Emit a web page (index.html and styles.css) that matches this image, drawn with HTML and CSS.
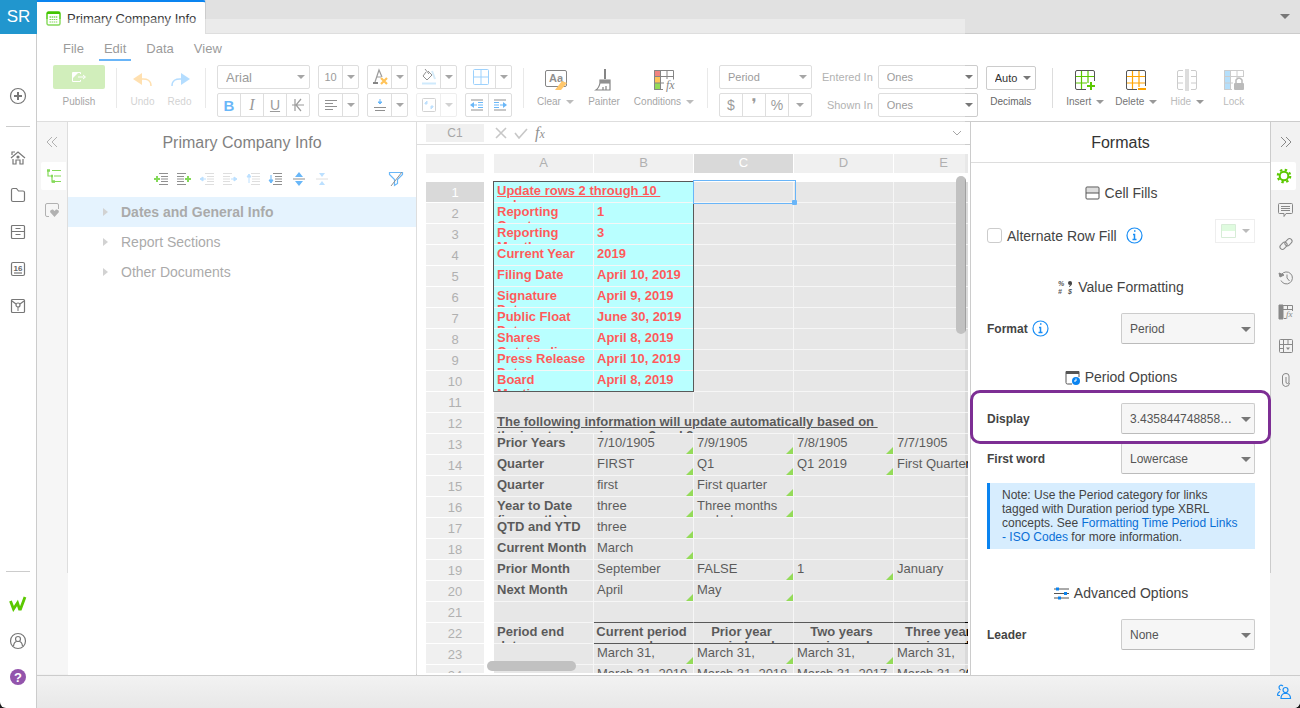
FILE: index.html
```html
<!DOCTYPE html>
<html lang="en">
<head>
    <meta charset="utf-8">
    <title>Primary Company Info</title>
    <meta name="viewport" content="width=device-width, initial-scale=1">
    <link rel="stylesheet" href="styles.css">
</head>
<body>
<div class="app">
    <nav class="rail" aria-label="Main">
        <a class="logo" href="#">SR</a>
        <button class="rail-btn add" aria-label="Create"><svg width="18" height="18" viewBox="0 0 18 18"><circle cx="9" cy="9" r="7.5"/><path d="M9 5v8M5 9h8" stroke-width="2"/></svg></button>
        <div class="rail-group">
            <button class="rail-btn" aria-label="Home"><svg width="16" height="16" viewBox="0 0 16 16"><path d="M1 8l7-6 7 6M2 5V2h3M3 9v5h3v-4h4v4h3V9"/><circle cx="8" cy="7" r="1" fill="#666"/></svg></button>
            <button class="rail-btn" aria-label="Files"><svg width="16" height="16" viewBox="0 0 16 16"><path d="M1.5 13V3q0-1.500 1.500-1.500h3.500l2 2.500H13q1.500 0 1.500 1.500V13q0 1.500-1.500 1.500H3q-1.500 0-1.500-1.500z"/></svg></button>
            <button class="rail-btn" aria-label="Archive"><svg width="16" height="16" viewBox="0 0 16 16"><rect x="1.500" y="1.500" width="13" height="13" rx="1"/><path d="M1.500 7.500h13M5.500 4.500h5M5.500 10.500h5"/></svg></button>
            <button class="rail-btn" aria-label="Calendar"><svg width="16" height="16" viewBox="0 0 16 16"><rect x="1.500" y="1.500" width="13" height="13" rx="1.500"/><path d="M4 12h8"/><text x="8" y="10" text-anchor="middle" class="cal-text">16</text></svg></button>
            <button class="rail-btn" aria-label="Ideas"><svg width="16" height="16" viewBox="0 0 16 16"><rect x="1.500" y="1.500" width="13" height="13" rx="1"/><path d="M2 3l4 3M14 3l-4 3M7 12h2M7 10h2"/><circle cx="8" cy="7" r="2"/></svg></button>
        </div>
        <div class="rail-foot">
            <a class="rail-btn" href="#" aria-label="Wdesk"><svg width="18" height="16" viewBox="0 0 18 16"><path d="M1.500 5l3 8 4-6 2 6h1L16 1" stroke="#5bc800" stroke-width="2.800"/></svg></a>
            <button class="rail-btn" aria-label="Account"><svg width="18" height="18" viewBox="0 0 18 18"><circle cx="9" cy="9" r="7.500"/><circle cx="9" cy="7" r="2.500"/><path d="M4.500 14q.5-4 3-4.500M13.500 14q-.5-4-3-4.500"/></svg></button>
            <button class="rail-btn help" aria-label="Help">?</button>
        </div>
    </nav>

    <div class="main">
        <header class="tabs">
            <a class="tab" href="#"><svg width="15" height="15" viewBox="0 0 15 15"><rect x="1" y="1" width="13" height="13" rx="1.500" fill="none" stroke="#43c500" stroke-width="1.400"/><path d="M1 2h13" stroke="#43c500" stroke-width="2"/><path d="M3.500 6h8M3.500 8.500h8M3.500 11h8" stroke="#43c500" stroke-dasharray="1.500 .6"/></svg>Primary Company Info</a>
            <button class="caret-btn" aria-label="All tabs"><i class="caret big"></i></button>
        </header>

        <div class="toolbar">
            <nav class="menu">
                <a href="#">File</a><a href="#" class="active">Edit</a><a href="#">Data</a><a href="#">View</a>
            </nav>
            <div class="ribbon">
                <button class="tool publish"><span class="publish-face"><svg width="16" height="12" viewBox="0 0 16 12"><path d="M9.500 3V1.500h-8v9h8V9M7 6h7M12 4l2.500 2L12 8" fill="none" stroke="#fff"/><path d="M2 7l5-5H2z" fill="#fff"/></svg></span><span class="label">Publish</span></button>
                <div class="sep"></div>
                <button class="tool off undo"><svg width="22" height="20" viewBox="0 0 22 20"><path d="M1 9l9-6v12z" fill="#ffd086"/><path d="M9 9q10-1 10 7" fill="none" stroke="#ffd086" stroke-width="1.500"/></svg><span class="label">Undo</span></button>
                <button class="tool off"><svg width="22" height="20" viewBox="0 0 22 20"><path d="M21 9l-9-6v12z" fill="#8dcbff"/><path d="M13 9q-10-1-10 7" fill="none" stroke="#8dcbff" stroke-width="1.500"/></svg><span class="label">Redo</span></button>
                <div class="sep"></div>

                <div class="stack">
                    <span class="select font"><select aria-label="Font"><option>Arial</option></select></span>
                    <div class="btns">
                        <button class="on" aria-label="Bold">B</button>
                        <button class="italic" aria-label="Italic">I</button>
                        <button class="underline" aria-label="Underline">U</button>
                        <button aria-label="Strikethrough"><svg width="14" height="14" viewBox="0 0 14 14"><path d="M1 7h12M4 1v12M10 1L5 7l5 6" fill="none" stroke="#666" stroke-width="1.200"/></svg></button>
                    </div>
                </div>
                <div class="stack">
                    <div class="btns split"><button>10</button><button aria-label="Font size"><i class="caret"></i></button></div>
                    <div class="btns split"><button aria-label="Align"><svg width="14" height="12" viewBox="0 0 14 12"><path d="M1 1.500h12M1 4.500h8M1 7.500h12M1 10.500h8" stroke="#555"/></svg></button><button aria-label="Alignment options"><i class="caret"></i></button></div>
                </div>
                <div class="stack">
                    <div class="btns split"><button aria-label="Text color"><svg width="18" height="18" viewBox="0 0 18 18"><path d="M4 14L8 2l3 7M6 9h4" fill="none" stroke="#666" stroke-width="1.200"/><path d="M2 15h5" stroke="#444" stroke-width="2"/><path d="M10 10l6 6M16 10l-6 6" stroke="#ffa400" stroke-width="2.200"/></svg></button><button aria-label="Color options"><i class="caret"></i></button></div>
                    <div class="btns split"><button aria-label="Vertical align"><svg width="14" height="14" viewBox="0 0 14 14"><path d="M1 9.500h12M2 12.500h10" stroke="#555"/><path d="M7 1v5M5 4l2 2 2-2z" fill="#1a91f5" stroke="#1a91f5"/></svg></button><button aria-label="Vertical options"><i class="caret"></i></button></div>
                </div>
                <div class="stack">
                    <div class="btns split"><button aria-label="Fill"><svg width="18" height="18" viewBox="0 0 18 18"><path d="M6 4L3 8l4 4 5-5-4-4M5 1l4 5" fill="none" stroke="#555"/><path d="M12 3l3 8" stroke="#bfe0f5" stroke-width="2"/><path d="M2 15.500h14" stroke="#b5dffb" stroke-width="2"/></svg></button><button aria-label="Fill options"><i class="caret"></i></button></div>
                    <div class="btns split faint"><button aria-label="Merge"><svg width="16" height="16" viewBox="0 0 16 16"><rect x="1.500" y="1.500" width="13" height="13" rx="1" fill="none" stroke="#777"/><path d="M4 7V6l2-2v3zM12 9v1l-2 2V9z" fill="#3ba2fb" stroke="#3ba2fb"/></svg></button><button aria-label="Merge options"><i class="caret"></i></button></div>
                </div>
                <div class="stack">
                    <div class="btns split wide"><button aria-label="Borders"><svg width="16" height="16" viewBox="0 0 16 16"><path d="M1.500 .5h13q1 0 1 1v13q0 1-1 1h-13q-1 0-1-1v-13q0-1 1-1zM8 .5v15M.5 8h15" fill="none" stroke="#69b9fb"/></svg></button><button aria-label="Border options"><i class="caret"></i></button></div>
                    <div class="btns pair"><button aria-label="Decrease indent"><svg width="14" height="12" viewBox="0 0 14 12"><path d="M1 1h12M1 11h12" stroke="#555"/><path d="M8 3.500h5M8 6h5M8 8.500h5M3 6h4" stroke="#1a91f5"/><path d="M0 6l4-3v6z" fill="#1a91f5"/></svg></button><button aria-label="Increase indent"><svg width="14" height="12" viewBox="0 0 14 12"><path d="M1 1h12M1 11h12" stroke="#555"/><path d="M1 3.500h5M1 6h5M1 8.500h5M7 6h4" stroke="#1a91f5"/><path d="M14 6l-4-3v6z" fill="#1a91f5"/></svg></button></div>
                </div>
                <div class="sep"></div>

                <button class="tool w-clear"><svg width="24" height="22" viewBox="0 0 24 22"><rect x="1.500" y="1.500" width="21" height="16" rx="1.500" fill="none" stroke="#444"/><text x="12" y="13" text-anchor="middle" class="aa-text">Aa</text><path d="M11 21l7-9 5 2-6 7z" fill="#ffa91c"/></svg><span class="label">Clear <i class="caret"></i></span></button>
                <button class="tool w-painter"><svg width="20" height="24" viewBox="0 0 20 24"><path d="M11 1v10" stroke="#444" stroke-width="2"/><path d="M6 15v-3h10v10H2q3-2 4-7zh10M9 22v-3M12 22v-4" fill="none" stroke="#444" stroke-width="1.200"/><path d="M6 12h10v3H6z" fill="#555"/></svg><span class="label">Painter</span></button>
                <button class="tool w-cond"><svg width="22" height="22" viewBox="0 0 22 22"><path d="M1 1h6v6H1z" fill="#e8413d"/><path d="M1 7h6v7H1z" fill="#ffa700"/><path d="M1 14h6v7H1z" fill="#5bc800"/><path d="M1.500 1.500h19v9M1.500 1.500v19H10M7.500 1v20M14 1v9M1 7.500h19M1 14h10" fill="none" stroke="#444"/><text x="13" y="20" class="fx-text">fx</text></svg><span class="label">Conditions <i class="caret"></i></span></button>
                <div class="sep"></div>

                <div class="stack">
                    <span class="select period"><select aria-label="Value format"><option>Period</option></select></span>
                    <div class="btns signs"><button>$</button><button class="comma" aria-label="Thousands separator">❜</button><button>%</button><button aria-label="More formats"><i class="caret"></i></button></div>
                </div>
                <div class="stack fields">
                    <div class="field"><label for="entered">Entered In</label><span class="select ones"><select id="entered"><option>Ones</option></select></span></div>
                    <div class="field"><label for="shown">Shown In</label><span class="select ones"><select id="shown"><option>Ones</option></select></span></div>
                </div>
                <div class="decimals">
                    <span class="select auto"><select id="decimals"><option>Auto</option></select></span>
                    <label for="decimals">Decimals</label>
                </div>
                <div class="sep"></div>

                <button class="tool solid"><svg width="22" height="22" viewBox="0 0 22 22"><path d="M7.500 1v20M14 1v13M1 7.500h20M1 14h12" stroke="#5bc800" stroke-width="1.200"/><path d="M20.500 12V3q0-1.500-1.500-1.500H3Q1.500 1.500 1.500 3v16q0 1.500 1.500 1.500h9" fill="none" stroke="#555"/><path d="M17 13v8M13 17h8" stroke="#5bc800" stroke-width="2"/></svg><span class="label">Insert <i class="caret"></i></span></button>
                <button class="tool solid"><svg width="22" height="22" viewBox="0 0 22 22"><path d="M7.500 1v20M14 1v17M1 7.500h20M1 14h20" stroke="#ffa400" stroke-width="1.200"/><path d="M20.500 17V3q0-1.500-1.500-1.500H3Q1.500 1.500 1.500 3v16q0 1.500 1.500 1.500h9" fill="none" stroke="#555"/><path d="M13 20h8" stroke="#ffa400" stroke-width="2"/></svg><span class="label">Delete <i class="caret"></i></span></button>
                <button class="tool solid off"><svg width="22" height="24" viewBox="0 0 22 24"><path d="M9 1h4v22H9z" fill="#ddd"/><path d="M7 2.500H3Q1.500 2.500 1.500 4v16q0 1.500 1.500 1.500h4M15 2.500h4q1.500 0 1.500 1.500v16q0 1.500-1.500 1.500h-4M1 8.500h6M1 15h6M15 8.500h6M15 15h6" fill="none" stroke="#ccc"/></svg><span class="label">Hide <i class="caret"></i></span></button>
                <button class="tool solid off lock"><svg width="22" height="22" viewBox="0 0 22 22"><path d="M1 1h6v20H1z" fill="#b5dffb"/><path d="M20.500 8V1.500h-19v19H9M7.500 1v20M14 1v8M1 7.500h19M1 14h9" fill="none" stroke="#ccc"/><path d="M13 14v-3q3-4 6 0v3" fill="none" stroke="#bbb" stroke-width="1.500"/><rect x="11" y="14" width="10" height="7" rx="1" fill="#bbb"/></svg><span class="label">Lock</span></button>
            </div>
        </div>

        <div class="workspace">
            <div class="side-tabs left">
                <button class="collapse" aria-label="Collapse"><svg width="12" height="12" viewBox="0 0 12 12"><path d="M6 1L1 6l5 5M11 1L6 6l5 5"/></svg></button>
                <button class="current" aria-label="Outline"><svg width="16" height="16" viewBox="0 0 16 16"><path d="M2 2v6h3M6 2.500h9M8 8h7M6 8v6h3M9 13.500h6" stroke="#43c500" stroke-width="1.200"/><path d="M1 2.500h3M5 8h2M6 13.500h3" stroke="#43c500" stroke-width="2.500"/></svg></button>
                <button aria-label="Favorites"><svg width="16" height="16" viewBox="0 0 16 16"><path d="M5 14.500H3q-1.500 0-1.500-1.500V3q0-1.500 1.500-1.500h10q1.500 0 1.500 1.500v4"/><path d="M10.500 15L6 10q0-3 3-2.500l1.500 1.500L12 7.500q3-.5 3 2.500z" fill="#888" stroke="none"/></svg></button>
            </div>

            <section class="outline">
                <h2>Primary Company Info</h2>
                <div class="outline-tools">
                    <button aria-label="Add section before"><svg width="16" height="14" viewBox="0 0 16 14"><path d="M6 1.500h9M8 4.500h7M8 7h7M8 9.500h7M6 12.500h9" stroke="#555"/><path d="M1 7h6M4 4v6" stroke="#43c500" stroke-width="2"/></svg></button>
                    <button aria-label="Add section after"><svg width="16" height="14" viewBox="0 0 16 14"><path d="M1 1.500h9M1 4.500h7M1 7h7M1 9.500h7M1 12.500h9" stroke="#555"/><path d="M9 7h6M12 4v6" stroke="#43c500" stroke-width="2"/></svg></button>
                    <button aria-label="Outdent"><svg width="16" height="14" viewBox="0 0 16 14"><path d="M6 1.500h9M8 4.500h7M8 7h7M8 9.500h7M6 12.500h9" stroke="#ccc"/><path d="M3 7h4M4 5L1 7l3 2z" fill="#98d0ff" stroke="#98d0ff"/></svg></button>
                    <button aria-label="Indent"><svg width="16" height="14" viewBox="0 0 16 14"><path d="M1 1.500h9M1 4.500h7M1 7h7M1 9.500h7M1 12.500h9" stroke="#ccc"/><path d="M9 7h4M12 5l3 2-3 2z" fill="#98d0ff" stroke="#98d0ff"/></svg></button>
                    <button aria-label="Move up"><svg width="16" height="14" viewBox="0 0 16 14"><path d="M6 1.500h9M7 4.500h8M7 7h8M7 9.500h8M6 12.500h9" stroke="#ccc"/><path d="M4 11V5M2 5l2-3 2 3z" fill="#98d0ff" stroke="#98d0ff"/></svg></button>
                    <button aria-label="Move down"><svg width="16" height="14" viewBox="0 0 16 14"><path d="M5 1.500h9M7 4.500h7M7 7h7M7 9.500h7M5 12.500h9" stroke="#555"/><path d="M3 3v6M1 8l2 3 2-3z" fill="#1a91f5" stroke="#1a91f5"/></svg></button>
                    <button aria-label="Expand all"><svg width="16" height="14" viewBox="0 0 16 14"><path d="M2 7h12" stroke="#555"/><path d="M8 0l4 5H4zM8 14l4-5H4z" fill="#1a91f5"/></svg></button>
                    <button aria-label="Collapse all"><svg width="16" height="14" viewBox="0 0 16 14"><path d="M2 7h12" stroke="#ccc"/><path d="M8 5l3-4H5zM8 9l3 4H5z" fill="#98d0ff"/></svg></button>
                    <button class="filter" aria-label="Filter"><svg width="16" height="16" viewBox="0 0 16 16"><path d="M1.500 1.500h13v2l-5 5v4l-3 2v-6l-5-5z" fill="none" stroke="#1a91f5" stroke-width="1.200"/><path d="M14 1L3 15" stroke="#555"/></svg></button>
                </div>
                <ul class="tree">
                    <li class="selected"><a href="#">Dates and General Info</a></li>
                    <li><a href="#">Report Sections</a></li>
                    <li><a href="#">Other Documents</a></li>
                </ul>
            </section>

            <section class="sheet">
                <div class="formula">
                    <span class="cell-name">C1</span>
                    <button aria-label="Cancel"><svg width="12" height="12" viewBox="0 0 12 12"><path d="M1 1l10 10M11 1L1 11" stroke="#aaa" stroke-width="1.600"/></svg></button>
                    <button aria-label="Accept"><svg width="14" height="12" viewBox="0 0 14 12"><path d="M1 6l4 5 8-9" fill="none" stroke="#aaa" stroke-width="1.600"/></svg></button>
                    <span class="fx">f<small>x</small></span>
                    <input type="text" aria-label="Formula">
                    <button aria-label="Expand formula bar"><svg width="10" height="8" viewBox="0 0 10 8"><path d="M1 2l4 4 4-4" fill="none" stroke="#777"/></svg></button>
                </div>
                <div class="grid">
                    <table>
                        <colgroup><col class="c-num"><col><col><col><col><col></colgroup>
                        <thead><tr><th></th><th>A</th><th>B</th><th class="hot">C</th><th>D</th><th>E</th></tr></thead>
                        <tbody>
                            <tr class="in"><th class="hot">1</th><td colspan="2"><div class="u">Update rows 2 through 10&nbsp;<br>only</div></td><td></td><td></td><td></td></tr>
                            <tr class="in"><th>2</th><td><div>Reporting<br>Quarter</div></td><td><div>1</div></td><td></td><td></td><td></td></tr>
                            <tr class="in"><th>3</th><td><div>Reporting<br>Month</div></td><td><div>3</div></td><td></td><td></td><td></td></tr>
                            <tr class="in"><th>4</th><td><div>Current Year</div></td><td><div>2019</div></td><td></td><td></td><td></td></tr>
                            <tr class="in"><th>5</th><td><div>Filing Date</div></td><td><div>April 10, 2019</div></td><td></td><td></td><td></td></tr>
                            <tr class="in"><th>6</th><td><div>Signature<br>Date</div></td><td><div>April 9, 2019</div></td><td></td><td></td><td></td></tr>
                            <tr class="in"><th>7</th><td><div>Public Float<br>Date</div></td><td><div>June 30, 2019</div></td><td></td><td></td><td></td></tr>
                            <tr class="in"><th>8</th><td><div>Shares<br>Outstanding</div></td><td><div>April 8, 2019</div></td><td></td><td></td><td></td></tr>
                            <tr class="in"><th>9</th><td><div>Press Release<br>Date</div></td><td><div>April 10, 2019</div></td><td></td><td></td><td></td></tr>
                            <tr class="in"><th>10</th><td><div>Board<br>Meeting</div></td><td><div>April 8, 2019</div></td><td></td><td></td><td></td></tr>
                            <tr><th>11</th><td></td><td></td><td></td><td></td><td></td></tr>
                            <tr><th>12</th><td colspan="4"><div class="u">The following information will update automatically based on&nbsp;<br>the input values in rows 2 and 3</div></td><td></td></tr>
                            <tr><th>13</th><td><div>Prior Years</div></td><td class="ln"><div>7/10/1905</div></td><td class="ln"><div>7/9/1905</div></td><td class="ln"><div>7/8/1905</div></td><td><div>7/7/1905</div></td></tr>
                            <tr><th>14</th><td><div>Quarter</div></td><td class="ln"><div>FIRST</div></td><td class="ln"><div>Q1</div></td><td class="ln"><div>Q1 2019</div></td><td><div>First Quarter</div></td></tr>
                            <tr><th>15</th><td><div>Quarter</div></td><td class="ln"><div>first</div></td><td class="ln"><div>First quarter</div></td><td></td><td></td></tr>
                            <tr><th>16</th><td><div>Year to Date<br>(in months)</div></td><td class="ln"><div>three</div></td><td class="ln"><div>Three months<br>ended</div></td><td></td><td></td></tr>
                            <tr><th>17</th><td><div>QTD and YTD</div></td><td class="ln"><div>three</div></td><td></td><td></td><td></td></tr>
                            <tr><th>18</th><td><div>Current Month</div></td><td class="ln"><div>March</div></td><td></td><td></td><td></td></tr>
                            <tr><th>19</th><td><div>Prior Month</div></td><td><div>September</div></td><td class="ln"><div>FALSE</div></td><td class="ln"><div>1</div></td><td><div>January</div></td></tr>
                            <tr><th>20</th><td><div>Next Month</div></td><td class="ln"><div>April</div></td><td class="ln"><div>May</div></td><td></td><td></td></tr>
                            <tr class="ruled"><th>21</th><td></td><td></td><td></td><td></td><td></td></tr>
                            <tr class="ruled heads"><th>22</th><td><div>Period end<br>date</div></td><td><div>Current period<br>end</div></td><td><div>Prior year<br>period end</div></td><td><div>Two years<br>prior end</div></td><td><div>Three years<br>prior end</div></td></tr>
                            <tr><th>23</th><td></td><td class="ln"><div>March 31,</div></td><td class="ln"><div>March 31,</div></td><td class="ln"><div>March 31,</div></td><td><div>March 31,</div></td></tr>
                            <tr><th>24</th><td></td><td><div>March 31, 2019</div></td><td><div>March 31, 2018</div></td><td><div>March 31, 2017</div></td><td><div>March 31, 2016</div></td></tr>
                        </tbody>
                    </table>
                    <div class="range"></div>
                    <div class="cursor"></div>
                    <div class="thumb-v"></div>
                    <div class="thumb-h"></div>
                </div>
            </section>

            <aside class="formats">
                <h2>Formats</h2>
                <div class="formats-body">
                    <h3><svg width="15" height="14" viewBox="0 0 15 14"><path d="M1.500 1.500h12V7h-12z" fill="#ddd"/><rect x="1" y="1" width="13" height="12" rx="1" fill="none" stroke="#555"/><path d="M1 7h13" stroke="#555"/></svg>Cell Fills</h3>
                    <div class="fill-row">
                        <label><input type="checkbox">Alternate Row Fill</label>
                        <svg class="info" width="17" height="17" viewBox="0 0 17 17"><circle cx="8.500" cy="8.500" r="7.500"/><path d="M7 7.500h1.500V12M6.500 12.500h4M8 4h1.500" stroke-width="1.500"/></svg>
                        <button class="fill-btn" aria-label="Fill color" disabled><svg width="15" height="14" viewBox="0 0 15 14"><path d="M.5.5h14v13H.5z" fill="#fff" stroke="#d7ecd7"/><path d="M1 1h13v6H1z" fill="#dffbdf"/></svg><i class="caret"></i></button>
                    </div>

                    <h3><svg width="15" height="15" viewBox="0 0 15 15"><g class="sym-text"><text x="0" y="6">%</text><text x="0" y="14">#</text><text x="10" y="14">$</text></g><circle cx="12" cy="3" r="2" fill="#444"/><path d="M13.500 3q0 3-2.500 3.500" fill="none" stroke="#444"/></svg>Value Formatting</h3>
                    <div class="row">
                        <label for="format">Format</label>
                        <svg class="info" width="17" height="17" viewBox="0 0 17 17"><circle cx="8.500" cy="8.500" r="7.500"/><path d="M7 7.500h1.500V12M6.500 12.500h4M8 4h1.500" stroke-width="1.500"/></svg>
                        <span class="select panel"><select id="format"><option>Period</option></select></span>
                    </div>

                    <h3 class="tight"><svg width="15" height="15" viewBox="0 0 15 15"><path d="M7 14H2.500Q1 14 1 12.500v-11h13V7" fill="none" stroke="#555"/><path d="M1 1h13v3H1z" fill="#555"/><circle cx="11" cy="11" r="4" fill="#0a84f0"/><path d="M11 8.500V11H9" fill="none" stroke="#fff"/></svg>Period Options</h3>
                    <div class="row marked">
                        <label for="display">Display</label>
                        <span class="select panel"><select id="display"><option>3.435844748858…</option></select></span>
                    </div>
                    <div class="row">
                        <label for="first-word">First word</label>
                        <span class="select panel"><select id="first-word"><option>Lowercase</option></select></span>
                    </div>
                    <p class="note">Note: Use the Period category for links tagged with Duration period type XBRL concepts. See <a href="#">Formatting Time Period Links - ISO Codes</a> for more information.</p>

                    <h3><svg width="15" height="13" viewBox="0 0 15 13"><path d="M0 2h15M0 6.500h15M0 11h15" stroke="#555"/><path d="M2 2h3M10 6.500h3M4 11h3" stroke="#0a84f0" stroke-width="3"/></svg>Advanced Options</h3>
                    <div class="row">
                        <label for="leader">Leader</label>
                        <span class="select panel"><select id="leader"><option>None</option></select></span>
                    </div>
                </div>
            </aside>

            <div class="side-tabs right">
                <button class="collapse" aria-label="Collapse"><svg width="12" height="12" viewBox="0 0 12 12"><path d="M1 1l5 5-5 5M6 1l5 5-5 5"/></svg></button>
                <button class="current" aria-label="Formats"><svg width="16" height="16" viewBox="0 0 16 16"><circle cx="8" cy="8" r="4.300" stroke="#5bc800" stroke-width="2"/><circle cx="8" cy="8" r="6.200" stroke="#5bc800" stroke-width="2.200" stroke-dasharray="2.400 2.470"/></svg></button>
                <button aria-label="Comments"><svg width="17" height="16" viewBox="0 0 17 16"><path d="M2.500 1.500h12q1 0 1 1v8q0 1-1 1H9l-2 3v-3H2.500q-1 0-1-1v-8q0-1 1-1zM4 4.500h9M4 6.500h9M4 8.500h9"/></svg></button>
                <button aria-label="Links"><svg width="16" height="16" viewBox="0 0 16 16"><g transform="rotate(-45 8 8)"><rect x="1" y="5" width="8" height="5" rx="2.500"/><rect x="7" y="6" width="8" height="5" rx="2.500"/></g></svg></button>
                <button aria-label="History"><svg width="16" height="16" viewBox="0 0 16 16"><path d="M3.500 4.500a6 6 0 1 1-.5 6M9 4.500V8l2.500 3"/><path d="M1 3l1 4 4-2z" fill="#888"/></svg></button>
                <button aria-label="Conditional formats"><svg width="16" height="16" viewBox="0 0 16 16"><path d="M1 1h4v14H1z" fill="#888"/><path d="M1.500 14.500v-13h13V7M5 5.500h9M9.500 1v5M6 14.500h2"/><text x="8" y="13" class="fx-small">fx</text></svg></button>
                <button aria-label="Table"><svg width="16" height="16" viewBox="0 0 16 16"><rect x="1.500" y="1.500" width="13" height="13" rx="1"/><path d="M5.500 1.500v13M10 1.500v5M1.500 6.500h13M1.500 10.500h4"/><path d="M8 9.500h4l-2 2.500z" fill="#888" stroke="none"/></svg></button>
                <button aria-label="Attachments"><svg width="12" height="16" viewBox="0 0 12 16"><path d="M6 5v5q0 1.500 1.500 1.500T9 10V4Q9 1.500 6 1.500T2.500 4v7q0 3 3 3.500 4 0 4-3.500"/></svg></button>
            </div>
        </div>

        <footer class="status"><button aria-label="Collaborators"><svg width="16" height="16" viewBox="0 0 16 16"><circle cx="9.500" cy="6" r="2.500"/><path d="M5 14.500q0-4 3-5h3q3.500 1 3.500 5zM7 2q-3-2-4 1 0 2 1.500 3M1.500 11.500q0-3 2.500-4M1.500 11.500H4"/></svg></button></footer>
    </div>
    <!-- veil over everything except the formats panel -->
    <div class="veil"></div>
</div>
</body>
</html>
```
FILE: styles.css
```css
* {
    box-sizing: border-box;
}
html {
    background: #1a1a1a;
}
body {
    margin: 0;
    font-family: "Liberation Sans", Arial, sans-serif;
    font-size: 13px;
    color: #444;
}
button, select, input {
    font: inherit;
    color: inherit;
    margin: 0;
}
button {
    padding: 0;
    border: 0;
    background: none;
    display: flex;
    align-items: center;
    justify-content: center;
}
a {
    color: inherit;
    text-decoration: none;
}
h2, h3, p, ul {
    margin: 0;
    padding: 0;
}
svg {
    flex: none;
}
.app {
    position: relative;
    display: flex;
    height: 100vh;
    min-height: 600px;
    background: #fff;
    border-radius: 0 0 6px 6px;
    overflow: hidden;
}
.veil {
    position: absolute;
    top: 19px;
    left: 37px;
    right: 335px;
    bottom: 34px;
    background: rgba(255, 255, 255, 0.35);
    pointer-events: none;
}

/* main rail */
.rail {
    width: 37px;
    flex: none;
    display: flex;
    flex-direction: column;
    align-items: center;
    border-right: 1px solid #ccc;
}
.logo {
    width: 37px;
    height: 34px;
    line-height: 34px;
    margin-right: -1px;
    background: #2196ce;
    color: #fff;
    font-size: 17px;
    text-align: center;
}
.rail svg {
    fill: none;
    stroke: #777;
    stroke-width: 1.2;
}
.rail-btn {
    display: flex;
    align-items: center;
    justify-content: center;
    width: 24px;
    height: 37px;
}
.rail-btn.add {
    margin: 43px 0 12px;
}
.rail-group, .rail-foot {
    width: 24px;
    border-top: 1px solid #ccc;
}
.rail-group {
    padding-top: 12px;
}
.rail-foot {
    margin-top: auto;
    padding: 13px 0;
}
.rail-btn.help {
    width: 16px;
    height: 16px;
    margin: 10px 4px;
    border-radius: 50%;
    background: #9354ac;
    color: #fff;
    font-size: 13px;
    font-weight: bold;
}
.cal-text {
    font-size: 8px;
    font-weight: bold;
    fill: #666;
    stroke: none;
}

.main {
    flex: 1;
    min-width: 0;
    display: flex;
    flex-direction: column;
}

/* document tabs */
.tabs {
    height: 34px;
    flex: none;
    display: flex;
    justify-content: space-between;
    background: #e1e1e1;
    border-bottom: 1px solid #ccc;
}
.tab {
    display: flex;
    align-items: center;
    gap: 6px;
    height: 34px;
    padding: 0 9px;
    background: #fff;
    border-top: 2px solid #0a84f0;
    border-right: 1px solid #ccc;
    border-radius: 0 3px 0 0;
    color: #333;
}
.caret-btn {
    width: 31px;
}
.caret {
    display: inline-block;
    border: 4px solid transparent;
    border-top-color: #777;
    border-bottom: 0;
}
.caret.big {
    border-width: 5px 5px 0;
}

/* toolbar */
.toolbar {
    height: 88px;
    flex: none;
    border-bottom: 1px solid #ccc;
}
.menu {
    display: flex;
    gap: 10px;
    padding: 4px 21px 0;
    color: #666;
}
.menu a {
    padding: 0 5px;
    height: 23px;
    line-height: 21px;
}
.menu .active {
    border-bottom: 2px solid #1a8ef5;
}
.ribbon {
    display: flex;
    align-items: flex-start;
    gap: 8px;
    padding: 4px 16px 0;
    font-size: 11px;
    color: #666;
}
.sep {
    width: 1px;
    height: 40px;
    margin: 3px 3px 0;
    background: #ddd;
}
.tool {
    flex-direction: column;
    justify-content: space-between;
    height: 43px;
    min-width: 29px;
    padding-top: 3px;
    font-size: 10px;
}
.tool svg {
    height: 24px;
}
.label {
    display: flex;
    align-items: center;
    gap: 5px;
    line-height: 12px;
    color: #757575;
}
.label .caret {
    border-top-color: #999;
}
.tool.off .label {
    color: #bbb;
}
.publish {
    padding-top: 0;
}
.publish-face {
    display: flex;
    align-items: center;
    justify-content: center;
    width: 52px;
    height: 24px;
    border-radius: 2px;
    background: #b9e597;
}
.publish-face svg {
    height: 12px;
}
.w-clear {
    width: 41px;
}
.w-painter {
    width: 40px;
}
.w-cond {
    width: 64px;
}
.tool.solid {
    width: 43px;
}
.tool.solid.lock {
    width: 34px;
}
.stack {
    display: flex;
    flex-direction: column;
    gap: 4px;
}
.btns {
    display: flex;
    height: 24px;
    border: 1px solid #ccc;
    border-radius: 2px;
}
.btns button {
    flex: 1;
}
.btns button + button {
    border-left: 1px solid #ccc;
}
.split {
    width: 41px;
}
.split button:first-child {
    flex: none;
    width: 23px;
}
.split.wide, .pair {
    width: 47px;
}
.split.wide button:first-child {
    width: 29px;
}
.btns .on {
    font-size: 15px;
    color: #1a91f5;
    font-weight: bold;
}
.btns .italic {
    font: italic 16px "Liberation Serif", serif;
}
.btns .underline {
    font-size: 14px;
    text-decoration: underline;
}
.signs {
    font-size: 14px;
}
.signs .comma {
    font: 16px "DejaVu Sans", sans-serif;
    line-height: 24px;
}
.faint {
    opacity: 0.5;
}
.select {
    position: relative;
    display: block;
}
.select select {
    display: block;
    width: 100%;
    height: 24px;
    padding: 0 16px 0 8px;
    border: 1px solid #ccc;
    border-radius: 2px;
    background: #fff;
    appearance: none;
}
.select::after {
    content: "";
    position: absolute;
    right: 5px;
    top: calc(50% - 2px);
    border: 4px solid transparent;
    border-top-color: #777;
    border-bottom: 0;
    pointer-events: none;
}
.select.font {
    width: 93px;
    font-size: 13px;
}
.select.period {
    width: 93px;
}
.field {
    display: flex;
    align-items: center;
    justify-content: flex-end;
    gap: 5px;
}
.field label {
    color: #888;
}
.fields {
    margin-left: 2px;
}
.select.ones {
    width: 100px;
}
.decimals {
    display: flex;
    flex-direction: column;
    align-items: center;
    gap: 6px;
    margin-right: 5px;
    padding-top: 1px;
}
.decimals label {
    font-size: 10px;
}
.select.auto {
    width: 50px;
    color: #333;
}
.aa-text {
    font-size: 11px;
    font-weight: bold;
    fill: #555;
}
.fx-text {
    font: italic 12px "Liberation Serif", serif;
    fill: #444;
}

/* workspace */
.workspace {
    flex: 1;
    min-height: 0;
    display: flex;
}
.side-tabs {
    width: 30px;
    flex: none;
    padding-top: 6px;
    background: #f2f2f2 linear-gradient(#ccc, #ccc) no-repeat;
}
.side-tabs.left {
    width: 31px;
    background-position: right top;
    background-size: 1px 451px;
}
.side-tabs.right {
    background-size: 1px 451px;
}
.side-tabs button {
    width: 29px;
    height: 34px;
    margin-left: 1px;
}
.side-tabs.left button {
    margin-left: 0;
}
.side-tabs .collapse {
    height: 28px;
}
.side-tabs .current {
    height: 28px;
    margin-top: 6px;
    margin-bottom: 3px;
    width: 25px;
    border-radius: 0 2px 2px 0;
    background: #fff;
}
.side-tabs.left .current {
    margin-left: 4px;
    border-radius: 2px 0 0 2px;
}
.side-tabs svg {
    fill: none;
    stroke: #888;
}
.fx-small {
    font: italic 9px "Liberation Serif", serif;
    fill: #888;
    stroke: none;
}

/* outline */
.outline {
    width: 348px;
    flex: none;
}
.outline h2 {
    height: 41px;
    line-height: 41px;
    font-size: 16px;
    font-weight: normal;
    text-align: center;
    color: #3c3c3c;
}
.outline-tools {
    display: flex;
    align-items: center;
    gap: 7px;
    height: 34px;
    padding: 0 12px 3px 85px;
}
.outline-tools .filter {
    margin-left: auto;
}
.tree {
    list-style: none;
    font-size: 14px;
    color: #7d7d7d;
}
.tree li {
    display: flex;
    align-items: center;
    height: 30px;
    padding-left: 35px;
}
.tree li::before {
    content: "";
    margin-right: 13px;
    border: 4px solid transparent;
    border-left: 5px solid #bbb;
    border-right: 0;
}
.tree .selected {
    background: #d7edfd;
    font-weight: bold;
}

/* sheet */
.sheet {
    flex: 1;
    min-width: 0;
    display: flex;
    flex-direction: column;
    border-left: 1px solid #ccc;
}
.formula {
    display: flex;
    align-items: center;
    gap: 7px;
    height: 23px;
    flex: none;
    padding: 0 8px 0 9px;
    border-bottom: 1px solid #ccc;
}
.cell-name {
    width: 58px;
    margin-right: 4px;
    line-height: 18px;
    background: #e8e8e8;
    font-size: 12px;
    text-align: center;
    color: #777;
}
.fx {
    font: italic 16px "Liberation Serif", serif;
    line-height: 20px;
    color: #555;
}
.fx small {
    font-size: 12px;
}
.formula input {
    flex: 1;
    min-width: 0;
    height: 18px;
    border: 0;
    outline: 0;
}
.grid {
    position: relative;
    flex: 1;
    min-height: 0;
    margin: 0 2px 2px 9px;
    padding-top: 9px;
    overflow: hidden;
}
.grid table {
    width: 568px;
    table-layout: fixed;
    border-collapse: separate;
    border-spacing: 0;
    color: #000;
}
.c-num {
    width: 68px;
}
.grid th, .grid td {
    height: 21px;
    padding: 0;
    border-right: 1px solid #f2f2f2;
    border-bottom: 1px solid #f2f2f2;
    background: #dadada;
    vertical-align: top;
}
.grid td {
    position: relative;
}
.grid th {
    background: #e8e8e8;
    border-color: #fff;
    color: #868686;
    font-weight: normal;
    line-height: 18px;
}
.grid thead th {
    height: 28px;
    border-bottom: 9px solid #fff;
}
.grid tbody th {
    padding-top: 2px;
}
.grid th:first-child {
    border-right-width: 10px;
}
.grid th.hot {
    background: #c5c5c5;
    color: #fff;
}
.grid td div {
    height: 20px;
    padding: 2px 0 0 3px;
    line-height: 14px;
    white-space: nowrap;
    overflow: hidden;
}
.grid td:nth-child(2) {
    font-weight: bold;
}
.grid .in td:nth-child(2), .grid .in td:nth-child(3) {
    background: #94ffff;
    color: #f00;
    font-weight: bold;
}
.grid .in td[colspan] + td {
    background: #dadada;
}
.u {
    text-decoration: underline;
}
.ln::after {
    content: "";
    position: absolute;
    right: 0;
    bottom: 0;
    border-left: 7px solid transparent;
    border-bottom: 7px solid #5bc800;
}
.ruled td:nth-child(n+3) {
    border-bottom-color: #000;
}
.heads td:nth-child(n+3) {
    font-weight: bold;
    text-align: center;
}
.heads td:nth-child(n+3) div {
    padding-left: 0;
    padding-right: 4px;
}
.range {
    position: absolute;
    top: 36px;
    left: 67px;
    width: 201px;
    height: 211px;
    border: 1px solid #000;
}
.cursor {
    position: absolute;
    top: 35px;
    left: 267px;
    width: 103px;
    height: 24px;
    border: 1px solid #1a8ef5;
}
.cursor::after {
    content: "";
    position: absolute;
    right: -2px;
    bottom: -2px;
    width: 5px;
    height: 5px;
    border-radius: 1px;
    background: #1a8ef5;
}
.thumb-v, .thumb-h {
    position: absolute;
    border-radius: 5px;
    background: #a0a0a0;
}
.thumb-v {
    top: 31px;
    right: 2px;
    width: 10px;
    height: 158px;
}
.thumb-h {
    left: 61px;
    bottom: 2px;
    width: 89px;
    height: 10px;
}

/* formats panel */
.formats {
    width: 300px;
    flex: none;
    border-left: 1px solid #ccc;
    color: #444;
}
.formats h2 {
    height: 41px;
    line-height: 41px;
    border-bottom: 1px solid #ddd;
    font-size: 16px;
    font-weight: normal;
    text-align: center;
    color: #333;
}
.formats-body {
    padding: 15px 15px 0 16px;
    font-size: 12px;
}
.formats h3 {
    display: flex;
    align-items: center;
    justify-content: center;
    gap: 5px;
    height: 30px;
    margin-bottom: 11px;
    font-size: 14px;
    font-weight: normal;
}
.fill-row {
    display: flex;
    align-items: center;
    height: 33px;
    margin-bottom: 20px;
}
.fill-row label {
    display: flex;
    align-items: center;
    gap: 5px;
    font-size: 14px;
}
.fill-row input {
    width: 15px;
    height: 15px;
    border: 1px solid #ccc;
    border-radius: 3px;
    appearance: none;
}
.info {
    margin-left: 9px;
    fill: none;
    stroke: #1a8ef5;
    stroke-width: 1.2;
}
.fill-btn {
    gap: 6px;
    width: 40px;
    height: 24px;
    margin: 0 0 10px auto;
    border: 1px solid #eee;
}
.fill-btn .caret {
    border-top-color: #bbb;
}
.row {
    position: relative;
    display: flex;
    align-items: center;
    height: 31px;
    margin-bottom: 9px;
}
.row label {
    font-weight: bold;
}
.row .info {
    margin-left: 4px;
}
.select.panel {
    width: 134px;
    margin-left: auto;
}
.select.panel select {
    height: 31px;
    border-bottom-color: #bbb;
    background: #f6f6f6;
    color: #555;
}
.select.panel::after {
    right: 4px;
    border-width: 5px 5px 0;
}
.formats h3.tight {
    margin-top: 18px;
}
.marked::after {
    content: "";
    position: absolute;
    inset: -13px -16px -10px -17px;
    border: 3px solid #7d2e94;
    border-radius: 10px;
    z-index: 1;
    pointer-events: none;
}
.note {
    height: 66px;
    margin-bottom: 29px;
    padding: 5px 12px 5px 12px;
    border-left: 3px solid #0a84f0;
    background: #d7edfe;
    line-height: 14px;
}
.note a {
    color: #0a6fd6;
}
.sym-text {
    font: italic bold 7px "Liberation Sans", sans-serif;
    fill: #555;
}

.status {
    display: flex;
    justify-content: flex-end;
    align-items: center;
    height: 33px;
    flex: none;
    padding-right: 8px;
    border-top: 1px solid #ccc;
    background: linear-gradient(#f2f2f2, #e8e8e8);
}
.status svg {
    fill: none;
    stroke: #1a8ef5;
    stroke-width: 1.2;
}
```
